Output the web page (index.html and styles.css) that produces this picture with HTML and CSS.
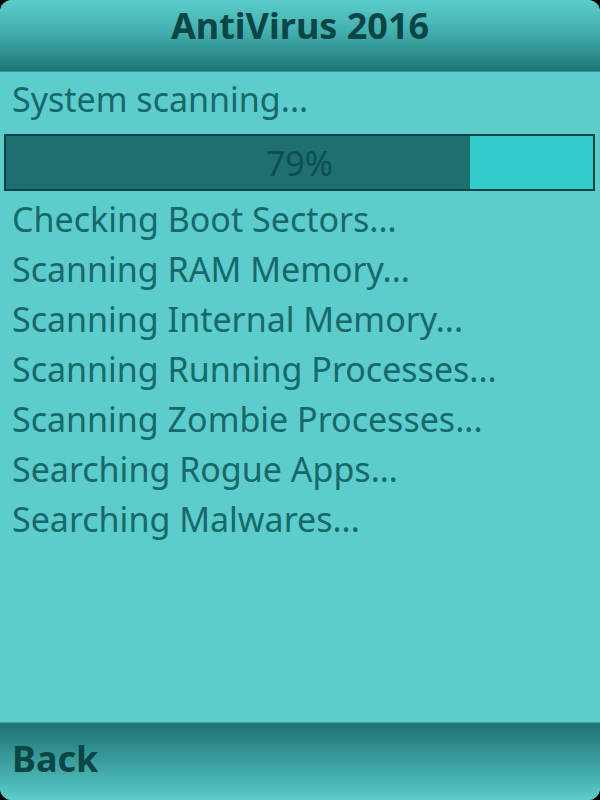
FILE: index.html
```html
<!DOCTYPE html>
<html>
<head>
<meta charset="utf-8">
<link rel="stylesheet" href="styles.css">
</head>
<body>
<div class="screen">
  <header class="title-bar"><h1 class="title">AntiVirus 2016</h1></header>
  <main class="content">
    <div class="line status">System scanning...</div>
    <div class="progress">
      <div class="progress-fill" style="width: 79%"></div>
      <span class="progress-label">79%</span>
    </div>
    <div class="line">Checking Boot Sectors...</div>
    <div class="line">Scanning RAM Memory...</div>
    <div class="line">Scanning Internal Memory...</div>
    <div class="line">Scanning Running Processes...</div>
    <div class="line">Scanning Zombie Processes...</div>
    <div class="line">Searching Rogue Apps...</div>
    <div class="line">Searching Malwares...</div>
  </main>
  <footer class="soft-bar"><span class="softkey">Back</span></footer>
</div>
</body>
</html>
```
FILE: styles.css
```css
html, body {
  margin: 0;
  padding: 0;
  background: #000;
}
.screen {
  width: 600px;
  height: 800px;
  display: flex;
  flex-direction: column;
  background: #5ccccc;
  border-radius: 12px;
  overflow: hidden;
  font-family: "Noto Sans", "DejaVu Sans", sans-serif;
}
.title-bar {
  height: 72px;
  box-sizing: border-box;
  border-bottom: 1px solid #2f9a9a;
  background: linear-gradient(to bottom, #5ccccc 0%, #44aeae 45%, #1f7676 100%);
  display: flex;
  justify-content: center;
}
.title {
  margin: 0;
  padding-top: 2px;
  font-size: 36px;
  line-height: 48px;
  font-weight: bold;
  color: #0a4646;
}
.content {
  flex: 1;
  padding: 2px 0 0 0;
  display: flex;
  flex-direction: column;
}
.line {
  font-size: 34px;
  line-height: 50px;
  color: #176868;
  padding-left: 12px;
  white-space: nowrap;
}
.status {
  margin-bottom: 10px;
}
.progress {
  position: relative;
  margin: 0 5px 3px 4px;
  height: 57px;
  box-sizing: border-box;
  border: 2px solid #0a4444;
  background: #33cccc;
  display: flex;
  align-items: center;
  justify-content: center;
}
.progress-fill {
  position: absolute;
  left: 0;
  top: 0;
  bottom: 0;
  background: #1e7070;
}
.progress-label {
  position: relative;
  font-size: 34px;
  color: #0d4f4f;
}
.soft-bar {
  height: 78px;
  box-sizing: border-box;
  border-top: 1px solid #3aa6a6;
  background: linear-gradient(to bottom, #1e7272 0%, #3a9e9e 50%, #5ccccc 100%);
  display: flex;
  align-items: flex-start;
}
.softkey {
  padding: 12px 0 0 12px;
  font-size: 36px;
  line-height: 48px;
  font-weight: bold;
  color: #0a4646;
}
```
